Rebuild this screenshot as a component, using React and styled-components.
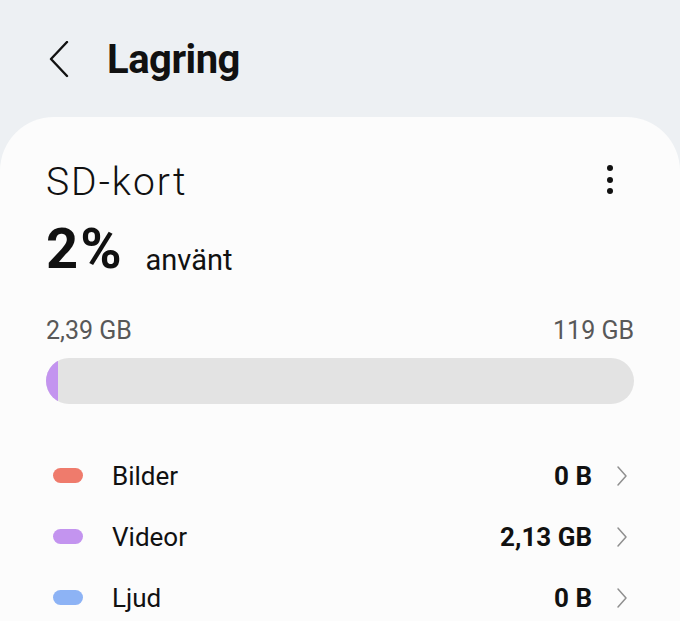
import React from "react";
import styled, { createGlobalStyle } from "styled-components";

const Global = createGlobalStyle`
  html, body { margin: 0; padding: 0; background: #edf0f3; }
  body { font-family: Roboto, "Noto Sans", sans-serif; -webkit-font-smoothing: antialiased; }
`;

const Page = styled.div`
  width: 680px;
  height: 621px;
  overflow: hidden;
  background: #edf0f3;
  display: flex;
  flex-direction: column;
`;

const Header = styled.header`
  height: 117px;
  flex: none;
  display: flex;
  align-items: center;
  padding: 2px 0 0 46px;
  box-sizing: border-box;
`;

const BackButton = styled.button`
  width: 26px;
  height: 38px;
  padding: 0;
  border: 0;
  background: none;
  display: flex;
  align-items: center;
  justify-content: center;
  margin-right: 35px;
`;

const Title = styled.h1`
  margin: 0;
  font-size: 40px;
  font-weight: 700;
  color: #111;
  letter-spacing: -0.5px;
`;

const Card = styled.section`
  flex: 1;
  background: #fcfcfc;
  border-radius: 54px 54px 0 0;
  padding: 42px 46px 0 46px;
`;

const TopRow = styled.div`
  display: flex;
  justify-content: space-between;
  align-items: flex-start;
`;

const DeviceName = styled.div`
  font-size: 39px;
  font-weight: 300;
  color: #111;
  line-height: 46px;
  letter-spacing: 2px;
`;

const Kebab = styled.div`
  display: flex;
  flex-direction: column;
  gap: 5.5px;
  padding: 6px 21px 0 0;
`;

const Dot = styled.span`
  width: 6px;
  height: 6px;
  border-radius: 50%;
  background: #111;
`;

const UsageRow = styled.div`
  display: flex;
  align-items: flex-end;
  gap: 22px;
  margin-top: 14px;
  height: 60px;
`;

const Percent = styled.span`
  font-size: 56px;
  font-weight: 700;
  color: #111;
  line-height: 60px;
  letter-spacing: 2px;
`;

const Used = styled.span`
  font-size: 29px;
  font-weight: 400;
  color: #111;
  line-height: 34px;
  padding-bottom: 2px;
`;

const Scale = styled.div`
  display: flex;
  justify-content: space-between;
  margin-top: 38px;
  font-size: 25px;
  color: #585858;
  line-height: 28px;
`;

const Bar = styled.div`
  margin-top: 13px;
  height: 46px;
  border-radius: 23px;
  background: #e3e3e3;
  overflow: hidden;
  display: flex;
`;

const Segment = styled.div`
  height: 100%;
  background: ${(p) => p.$color};
`;

const List = styled.ul`
  list-style: none;
  margin: 41px 0 0 0;
  padding: 0;
`;

const Row = styled.li`
  display: flex;
  align-items: center;
  height: 61px;
`;

const Swatch = styled.span`
  width: 30px;
  height: 15px;
  border-radius: 8px;
  background: ${(p) => p.$color};
  margin: 0 29px 0 7px;
  flex: none;
`;

const Label = styled.span`
  flex: 1;
  font-size: 26px;
  color: #111;
`;

const Value = styled.span`
  font-size: 26px;
  font-weight: 700;
  color: #111;
`;

const Chevron = styled.span`
  display: flex;
  margin-left: 24px;
  margin-right: 6px;
`;

const items = [
  { name: "Bilder", value: "0 B", color: "#ef7b6c" },
  { name: "Videor", value: "2,13 GB", color: "#c394ef" },
  { name: "Ljud", value: "0 B", color: "#8db3f5" },
];

export default function App() {
  return (
    <Page>
      <Global />
      <Header>
        <BackButton aria-label="Tillbaka">
          <svg width="22" height="38" viewBox="0 0 22 38">
            <path d="M19 1 L3 18 L19 35" fill="none" stroke="#111" strokeWidth="2.4" strokeLinecap="round" strokeLinejoin="round" />
          </svg>
        </BackButton>
        <Title>Lagring</Title>
      </Header>
      <Card>
        <TopRow>
          <DeviceName>SD-kort</DeviceName>
          <Kebab>
            <Dot />
            <Dot />
            <Dot />
          </Kebab>
        </TopRow>
        <UsageRow>
          <Percent>2%</Percent>
          <Used>använt</Used>
        </UsageRow>
        <Scale>
          <span>2,39 GB</span>
          <span>119 GB</span>
        </Scale>
        <Bar>
          <Segment $color="#c394ef" style={{ width: "12px" }} />
        </Bar>
        <List>
          {items.map((it) => (
            <Row key={it.name}>
              <Swatch $color={it.color} />
              <Label>{it.name}</Label>
              <Value>{it.value}</Value>
              <Chevron>
                <svg width="12" height="22" viewBox="0 0 12 22">
                  <path d="M2 2 L10 11 L2 20" fill="none" stroke="#8f8f8f" strokeWidth="1.5" strokeLinecap="round" strokeLinejoin="round" />
                </svg>
              </Chevron>
            </Row>
          ))}
        </List>
      </Card>
    </Page>
  );
}
